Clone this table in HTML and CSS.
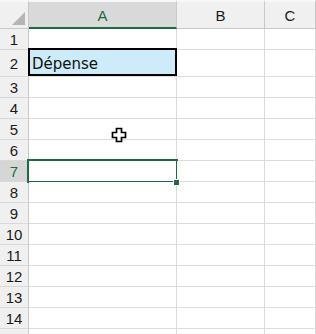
FILE: index.html
```html
<!DOCTYPE html>
<html>
<head>
<meta charset="utf-8">
<link rel="stylesheet" href="styles.css">
</head>
<body>
<div class="sheet">
  <div class="corner"><span class="tri"></span></div>
  <div class="colhead active">A</div>
  <div class="colhead">B</div>
  <div class="colhead">C</div>

  <div class="rowhead">1</div><div class="cell"></div><div class="cell"></div><div class="cell"></div>
  <div class="rowhead">2</div><div class="cell boxed">Dépense</div><div class="cell"></div><div class="cell"></div>
  <div class="rowhead">3</div><div class="cell"></div><div class="cell"></div><div class="cell"></div>
  <div class="rowhead">4</div><div class="cell"></div><div class="cell"></div><div class="cell"></div>
  <div class="rowhead">5</div><div class="cell"></div><div class="cell"></div><div class="cell"></div>
  <div class="rowhead">6</div><div class="cell"></div><div class="cell"></div><div class="cell"></div>
  <div class="rowhead active">7</div><div class="cell selected"><span class="handle"></span></div><div class="cell"></div><div class="cell"></div>
  <div class="rowhead">8</div><div class="cell"></div><div class="cell"></div><div class="cell"></div>
  <div class="rowhead">9</div><div class="cell"></div><div class="cell"></div><div class="cell"></div>
  <div class="rowhead">10</div><div class="cell"></div><div class="cell"></div><div class="cell"></div>
  <div class="rowhead">11</div><div class="cell"></div><div class="cell"></div><div class="cell"></div>
  <div class="rowhead">12</div><div class="cell"></div><div class="cell"></div><div class="cell"></div>
  <div class="rowhead">13</div><div class="cell"></div><div class="cell"></div><div class="cell"></div>
  <div class="rowhead">14</div><div class="cell"></div><div class="cell"></div><div class="cell"></div>
  <div class="rowhead"></div><div class="cell"></div><div class="cell"></div><div class="cell"></div>

  <svg class="cursor" width="17" height="17" viewBox="0 0 17 17">
    <polygon points="5.5,1.5 10.5,1.5 10.5,5.5 14.5,5.5 14.5,10.5 10.5,10.5 10.5,14.5 5.5,14.5 5.5,10.5 1.5,10.5 1.5,5.5 5.5,5.5" fill="#ffffff" stroke="#000000" stroke-width="1.7" stroke-linejoin="miter"/>
  </svg>
</div>
</body>
</html>
```
FILE: styles.css
```css
html, body {
  margin: 0;
  padding: 0;
  background: #ffffff;
  overflow: hidden;
}

.sheet {
  position: relative;
  width: 316px;
  height: 334px;
  display: grid;
  grid-template-columns: 29px 148px 88px 1fr;
  grid-template-rows: 29px 21px 27px repeat(13, 21px);
  font-family: "Liberation Sans", Arial, sans-serif;
  color: #1a1a1a;
  overflow: hidden;
}

.sheet > div {
  box-sizing: border-box;
}

.corner {
  position: relative;
  background: #f0f0f0;
  border-right: 1px solid #c8c8c8;
  border-bottom: 1px solid #c8c8c8;
  border-top: 2px solid #f8f8f8;
}

.tri {
  position: absolute;
  right: 3px;
  bottom: 3px;
  width: 0;
  height: 0;
  border-left: 13px solid transparent;
  border-bottom: 13px solid #b5b5b5;
}

.colhead {
  background: #f0f0f0;
  border-right: 1px solid #c8c8c8;
  border-bottom: 1px solid #c8c8c8;
  border-top: 2px solid #f8f8f8;
  display: flex;
  align-items: center;
  justify-content: center;
  font-size: 15px;
  padding-top: 1px;
}

.colhead.active {
  background: #d9d9d9;
  color: #1d6b40;
  border-bottom: 2px solid #1d6b40;
}

.rowhead {
  background: #f0f0f0;
  border-right: 1px solid #c8c8c8;
  border-bottom: 1px solid #d9d9d9;
  display: flex;
  align-items: center;
  justify-content: center;
  font-size: 15px;
}

.rowhead.active {
  background: #d6d6d6;
  color: #1d6b40;
}

.cell {
  position: relative;
  background: #ffffff;
  border-right: 1px solid #dcdcdc;
  border-bottom: 1px solid #dcdcdc;
}

.boxed {
  background: #cdebf8;
  display: flex;
  align-items: center;
  padding-left: 3px;
  padding-top: 2px;
  font-family: "DejaVu Sans", sans-serif;
  font-size: 15px;
  color: #111111;
}

.boxed::after {
  content: "";
  position: absolute;
  left: -1px;
  right: -1px;
  top: -2px;
  bottom: 0;
  border: 2px solid #000000;
}

.selected::after {
  content: "";
  position: absolute;
  left: -2px;
  right: -2px;
  top: -2px;
  bottom: -2px;
  border: 2px solid #1d6b40;
}

.handle {
  position: absolute;
  right: -4px;
  bottom: -5px;
  width: 5px;
  height: 5px;
  background: #1d6b40;
  border: 1px solid #ffffff;
  z-index: 2;
}

.cursor {
  position: absolute;
  left: 111px;
  top: 127px;
}
```
